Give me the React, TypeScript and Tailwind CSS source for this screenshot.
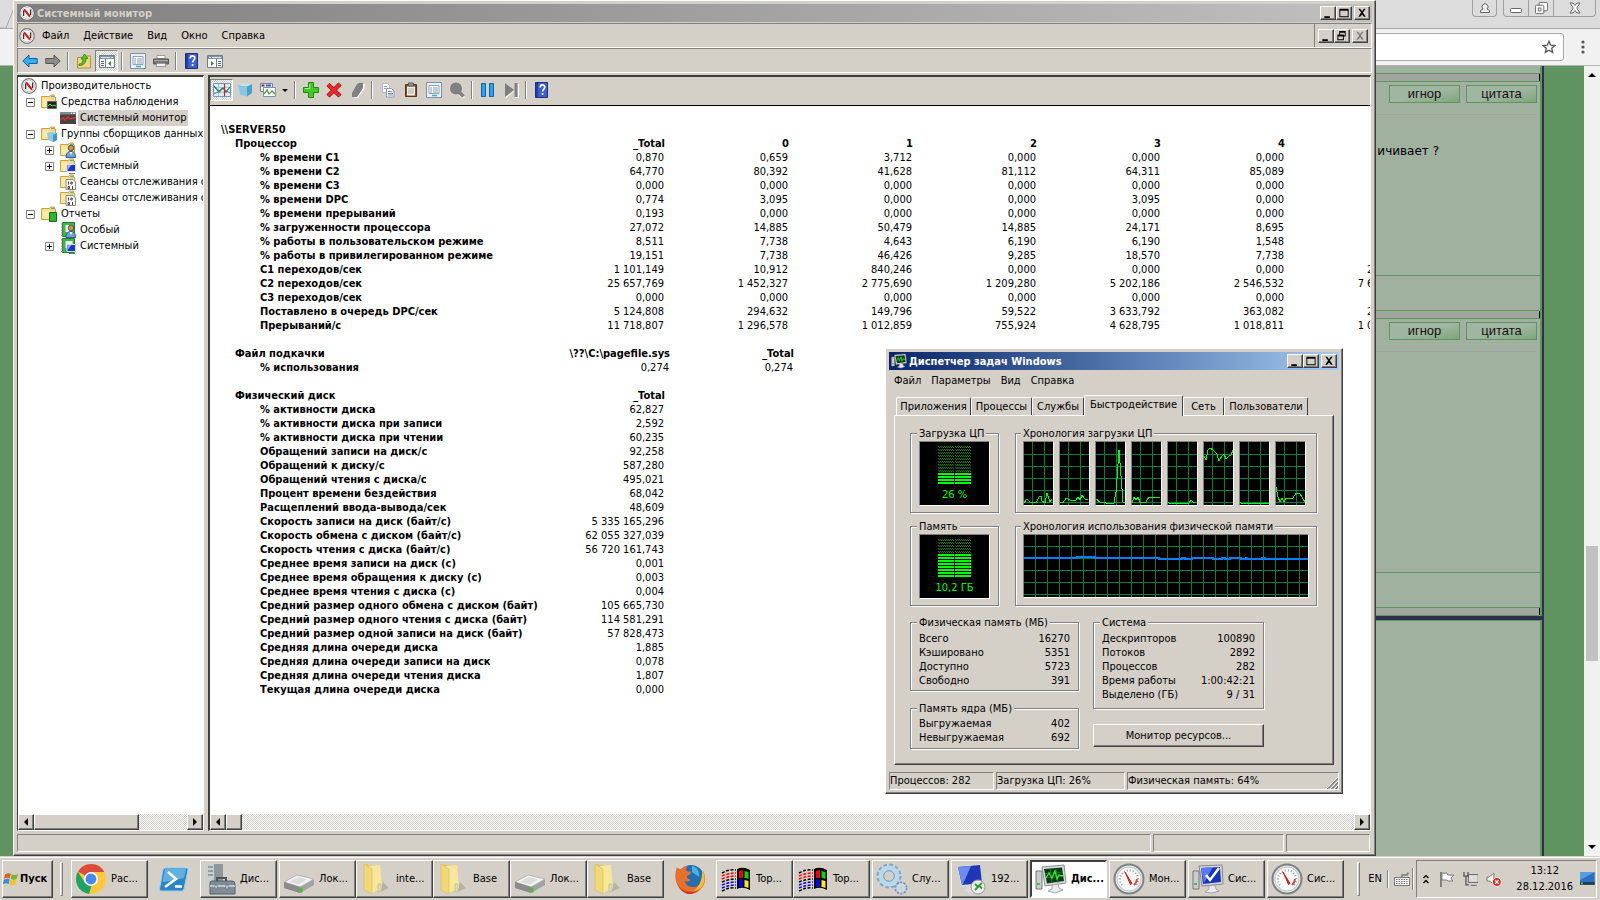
import type { ReactNode } from "react"
import clsx from "clsx"

const raised = "border border-t-white border-l-white border-r-[#404040] border-b-[#404040] bg-[#d4d0c8] shadow-[inset_-1px_-1px_0_#808080]"
const sunken = "border border-t-[#808080] border-l-[#808080] border-r-white border-b-white"
const dither = "bg-[repeating-conic-gradient(#fff_0_25%,#d4d0c8_0_50%)] bg-[length:2px_2px]"

type IconProps = { className?: string }

/* ---------- icons ---------- */

const Gauge = ({ className = "size-4" }: IconProps) => (
  <svg viewBox="0 0 16 16" className={className}>
    <circle cx="8" cy="8" r="7.3" fill="#fff" stroke="#777" strokeWidth="1.2" />
    <circle cx="8" cy="8" r="5.8" fill="#f4f4f2" stroke="#c4c4c4" strokeWidth=".8" />
    <path d="M4.600 11V5.500M11.600 10V4.500" stroke="#333" strokeWidth="1.300" />
    <path d="M5 4.400 11 11.600" stroke="#d81818" strokeWidth="2.200" />
  </svg>
)

const BigGauge = () => (
  <svg viewBox="0 0 32 32" className="size-8">
    <circle cx="16" cy="16" r="14.5" fill="#f4f4f2" stroke="#7c8284" strokeWidth="2" />
    <circle cx="16" cy="16" r="12" fill="#fbfbfa" stroke="#c9cccd" strokeWidth="1.4" />
    <path d="M9 22a9 9 0 1 1 14 0" fill="none" stroke="#999" strokeWidth="2" strokeDasharray="1 2" />
    <path d="M21 22a9 9 0 0 0 3-6" fill="none" stroke="#d44" strokeWidth="2" />
    <path d="m12 9 5.500 12.500 1.500-1z" fill="#e01818" stroke="#e01818" />
  </svg>
)

const Arrow = ({ color, stroke, flip }: { color: string; stroke: string; flip?: boolean }) => (
  <svg viewBox="0 0 16 16" className={clsx("size-4", flip && "-scale-x-100")}>
    <path d="M.8 8 7 2v3.500h8.200v5H7V14z" fill={color} stroke={stroke} />
  </svg>
)

const Folder = ({ children }: { children?: ReactNode }) => (
  <svg viewBox="0 0 16 16" className="size-4 shrink-0">
    <path d="M.5 2.500h8l1-1.500h4v2h1v10.500H.5z" fill="#f5dc84" stroke="#c9a24c" />
    <path d="M1.500 4.500h7v8.500h-7z" fill="#fbe9a8" />
    <path d="M10 2.500h3" stroke="#58a6dc" strokeWidth="1.200" />
    {children}
  </svg>
)

const person = (
  <>
    <circle cx="11" cy="6" r="2.800" fill="#c09468" stroke="#4d3a24" strokeWidth=".8" />
    <path d="M6 15.500c0-4 2-6 5-6s4.500 2 4.500 6z" fill="#6fa5d6" stroke="#2d5d90" />
    <path d="m9.500 10 1.500 3 1.500-3z" fill="#fff" />
  </>
)
const screen = (
  <>
    <path d="M7 6.500h8.500v7H7z" fill="#1a36d0" stroke="#dde" />
    <path d="m7.500 7 4 0-4 5z" fill="#8fa8f4" />
    <path d="M9 15.500h6" stroke="#777" />
  </>
)
const binary = (
  <>
    <path d="M6 5.500h7l2.500 2.500v7.500H6z" fill="#fff" stroke="#888" />
    <path d="M8.500 7.500v3M12.500 12v3" stroke="#444" />
    <path d="M10.800 8h1.400v2h-1.400zM8 12.500h1.500v2H8z" fill="none" stroke="#444" />
  </>
)

const Book = ({ children }: { children?: ReactNode }) => (
  <svg viewBox="0 0 16 16" className="size-4 shrink-0">
    <path d="M2.500.5h12v14h-12z" fill="#3cb648" stroke="#1e7c2b" />
    <path d="M5.500 3h7v7h-7z" fill="#e7f6e7" />
    <path d="M1 2h2M1 5h2M1 8h2M1 11h2M1 13.500h2" stroke="#888" />
    {children}
  </svg>
)

const MonitorGraph = () => (
  <svg viewBox="0 0 16 16" className="size-4 shrink-0">
    <path d="M0 2h16v12H0z" fill="#454545" />
    <path d="M0 2h16v2.500H0z" fill="#8a8a8a" />
    <path d="M11 3.200h1M13 3.200h2" stroke="#fff" />
    <path d="M0 10 3 8l2 2 3-3 2 2 3-1 3-.5" fill="none" stroke="#e23030" strokeWidth="1.500" />
  </svg>
)

const Cube = () => (
  <svg viewBox="0 0 16 16" className="size-4">
    <path d="M1 3.500 5 1.500l10 .5v9l-5 3.500-7-2z" fill="#bfe4f3" />
    <path d="m1 3.500 9 1 5-2.500v9l-5 3.500z" fill="#4d9fc8" />
    <path d="m1 3.500 9 1v10l-7-2z" fill="#8ac6e2" />
  </svg>
)

const PaneIcon = ({ flip }: { flip?: boolean }) => (
  <svg viewBox="0 0 16 16" className={clsx("size-4", flip && "-scale-x-100")}>
    <path d="M.5 2.500h15v12H.5z" fill="#fff" stroke="#6f7f90" />
    <path d="M1 3h14v3H1z" fill="#8393a5" />
    <path d="M2 4.500h9M12 4.500h2" stroke="#dfe6ee" />
    <path d="M6.500 6v8.500" stroke="#6f7f90" />
    <path d="M2 8.500h3M2 10.500h3M2 12.500h3" stroke="#567" />
    <path d="m9 10.500 3-2.500v5z" fill="#2a9a2a" />
  </svg>
)

const Props = () => (
  <svg viewBox="0 0 16 16" className="size-4">
    <path d="M.5.5h15v15H.5z" fill="#e9f0f6" stroke="#7b93a9" />
    <path d="M3 3.500h10v8H3z" fill="#fff" stroke="#93a3b3" />
    <path d="M4 6h2M7 6h5M4 8h2M7 8h5M4 10h2M7 10h5" stroke="#8a9caf" />
    <path d="M6 13.500h5" stroke="#2bb6e8" strokeWidth="1.500" />
  </svg>
)

const Printer = () => (
  <svg viewBox="0 0 16 16" className="size-4">
    <path d="M4 2.500h8v3H4z" fill="#fff" stroke="#999" />
    <path d="M.5 6h15v5H.5z" fill="#777" stroke="#555" />
    <path d="M1 7.500h14" stroke="#aaa" />
    <path d="M4 10.500h8l1 3H3z" fill="#eef4fa" stroke="#999" />
  </svg>
)

const Help = () => (
  <svg viewBox="0 0 16 16" className="size-4">
    <path d="M1.500.5h12v15h-12z" fill="#3c5fd0" stroke="#1c2f80" />
    <path d="M2 1h2v14H2z" fill="#243f9e" />
    <path d="M6.200 5.500c0-3.500 4.600-3.200 4.600-.4 0 2-2.200 2-2.200 4.400M8.600 11v2" fill="none" stroke="#fff" strokeWidth="1.700" />
  </svg>
)

const UpFolder = () => (
  <svg viewBox="0 0 16 16" className="size-4">
    <path d="M1.500 4.500h8l1-1.500h4v12h-13z" fill="#f2d680" stroke="#b98f3a" />
    <path d="M3 11c3 0 4-2 4-5H5l3.500-5L12 5.500h-2c0 4-2 7-7 7z" fill="#4fc52e" stroke="#278412" strokeWidth=".8" />
  </svg>
)

const ChartIcon = () => (
  <svg viewBox="0 0 18 16" className="h-4 w-[18px]">
    <path d="M.5 1.500h17v13H.5z" fill="#e2ecf7" stroke="#6f9acb" />
    <path d="M1 5.500h16M1 10.500h16M5.500 2v12" stroke="#a9c6e6" />
    <path d="m1 4 5 6 4-4 3 4 4-5" fill="none" stroke="#2c8c36" strokeWidth="1.200" />
    <path d="m1 12 4-2 4-4 8 5" fill="none" stroke="#3466c8" strokeWidth=".8" />
    <path d="M11.500 2v12" stroke="#d82020" strokeWidth="1.200" />
  </svg>
)

const GraphType = () => (
  <svg viewBox="0 0 16 16" className="size-4">
    <path d="M.5 1.500h12v8H.5z" fill="#f3f3fa" stroke="#6d7fa8" />
    <path d="M1.500 3.500h3" stroke="#a02050" strokeWidth="2" />
    <path d="M6 3.500h5" stroke="#3b62c8" strokeWidth="2" />
    <path d="M3.500 5.500h12v9h-12z" fill="#fff" stroke="#7b93b5" />
    <path d="m4 12 3-4 2 4 3-3 3 3" fill="none" stroke="#53a043" strokeWidth="1.300" />
  </svg>
)

const Plus = () => (
  <svg viewBox="0 0 16 16" className="size-4">
    <path d="M5.500.5h5v5h5v5h-5v5h-5v-5h-5v-5h5z" fill="#45c928" stroke="#168a10" />
    <path d="M6.500 2v4.500H2" fill="none" stroke="#a5ee8e" />
  </svg>
)

const Cross = () => (
  <svg viewBox="0 0 16 16" className="size-4">
    <path d="M2 2.500 14 14M14 2 2 14" stroke="#a80c0c" strokeWidth="4.500" />
    <path d="M2 2.500 14 14M14 2 2 14" stroke="#e82a2a" strokeWidth="3" />
  </svg>
)

const Pencil = () => (
  <svg viewBox="0 0 16 16" className="size-4">
    <path d="M5 16h3l7-10V2" fill="none" stroke="#fff" strokeWidth="1.500" />
    <path d="M8 2q3-2 6-1v5L8 15H3v-4z" fill="#808080" />
  </svg>
)

const Copy = () => (
  <svg viewBox="0 0 16 16" className="size-4">
    <path d="M2.500 1.500h5l2 2v7h-7z" fill="#fff" stroke="#b0b8c5" />
    <path d="M4 4.500h3M4 6.500h4" stroke="#8fa3c0" />
    <path d="M6.500 6.500h5l2.500 2.500v6H6.500z" fill="#fff" stroke="#8a9ab2" />
    <path d="M8 9.500h4M8 11.500h5M8 13h5" stroke="#6d8dbd" />
  </svg>
)

const Paste = () => (
  <svg viewBox="0 0 16 16" className="size-4">
    <path d="M2.500 2.500h11v12h-11z" fill="#80522a" stroke="#563416" />
    <path d="M4 4.500h8v9H4z" fill="#f4efe6" />
    <path d="M5.500 1h5v3h-5z" fill="#999" stroke="#555" />
    <path d="M5 7h6M5 9h6M5 11h6" stroke="#aaa" />
  </svg>
)

const Magnifier = () => (
  <svg viewBox="0 0 16 16" className="size-4">
    <path d="m11 12 4 4" stroke="#fff" strokeWidth="3" />
    <circle cx="7" cy="6.500" r="6" fill="#808080" />
    <path d="m10 10 4.500 4.500" stroke="#808080" strokeWidth="3.500" />
  </svg>
)

const Pause = () => (
  <svg viewBox="0 0 16 16" className="size-4">
    <path d="M1.500 1.500h4v13h-4zM9.500 1.500h4v13h-4z" fill="#2da0e8" stroke="#0d63a8" />
  </svg>
)

const Next = () => (
  <svg viewBox="0 0 16 16" className="size-4">
    <path d="M3 2v13.500L11 9M15.500 2v13.500H12" fill="none" stroke="#fff" />
    <path d="M2 1v14l9-7zM11.500 1h3v14h-3z" fill="#808080" />
  </svg>
)

const TaskmgrIcon = ({ className = "size-4" }: IconProps) => (
  <svg viewBox="0 0 32 32" className={className}>
    <path d="M1 8h6v18H1z" fill="#c9cdd0" stroke="#777" />
    <path d="M2 21h3" stroke="#3c3" strokeWidth="2" />
    <path d="m7 4 22-2 2 18-21 3z" fill="#d9dcde" stroke="#8a8e92" />
    <path d="m9 6 18-1.500L29 18l-17 2.500z" fill="#0a3a10" />
    <path d="M10 10.500 28 9M11 15l17-2M15 6l2 14M21 5.500l2 14" stroke="#157a20" />
    <path d="m11 15 3-5 3 5 3-7 2 8 2-4 4 1" fill="none" stroke="#36e83c" strokeWidth="1.300" />
    <path d="m17 22 6-1 1 4 4 2-8 3-7-2 4-2z" fill="#e8eaec" stroke="#a4a8ab" />
  </svg>
)

/* ---------- window chrome ---------- */

const glyphs = {
  min: <path d="M3 10h6v2H3z" />,
  max: <path d="M2 2h10v9H2zM3 4v6h8V4z" fillRule="evenodd" />,
  restore: <path d="M4 1h7v6H9v4H2V5h2zM5 3v2h4v1h1V3zM3 7v3h5V7z" fillRule="evenodd" />,
  close: <path d="M3 2h2l2 2.500L9 2h2L8 6l3 4.500H9L7 8l-2 2.500H3L6 6z" />,
}

const CaptionButton = ({ kind, label, disabled }: { kind: keyof typeof glyphs; label: string; disabled?: boolean }) => (
  <button aria-label={label} disabled={disabled} className={clsx("flex h-[14px] w-4 items-center justify-center", raised)}>
    <svg viewBox="0 0 14 13" className="h-3 w-3.5 shrink-0" fill={disabled ? "#808080" : "#000"}>
      {glyphs[kind]}
    </svg>
  </button>
)

const Captions = () => (
  <div className="ml-auto flex">
    <CaptionButton kind="min" label="Свернуть" />
    <CaptionButton kind="max" label="Развернуть" />
    <div className="w-0.5" />
    <CaptionButton kind="close" label="Закрыть" />
  </div>
)

const Sep = () => <div className="mx-[3px] h-[18px] w-0.5 border-l border-[#808080] bg-white" />

const Tool = ({ label, pressed, children }: { label: string; pressed?: boolean; children: ReactNode }) => (
  <button aria-label={label} className={clsx("flex h-[22px] w-[23px] items-center justify-center", pressed && [sunken, dither])}>
    {children}
  </button>
)

const Tri = ({ d }: { d: string }) => (
  <svg viewBox="0 0 8 8" className="size-2">
    <path d={d} />
  </svg>
)

const HScroll = ({ thumb }: { thumb: string }) => (
  <div className={clsx("flex h-4 shrink-0", dither)}>
    <button aria-label="Влево" className={clsx("flex w-4 items-center justify-center", raised)}><Tri d="M6 0v8L2 4z" /></button>
    <div className={clsx(thumb, raised)} />
    <button aria-label="Вправо" className={clsx("ml-auto flex w-4 items-center justify-center", raised)}><Tri d="M2 0v8l4-4z" /></button>
  </div>
)

/* ---------- browser behind the windows ---------- */

const PostButton = ({ children }: { children: ReactNode }) => (
  <button className="h-[18px] w-[71px] border border-[#5f935f] bg-linear-to-br from-[#a1b6a0] from-50% to-[#7da67c] font-['Liberation_Sans',sans-serif] text-[13px] leading-4 text-[#111]">
    {children}
  </button>
)

const PostBar = () => (
  <div className="h-[9px] shrink-0 border-y border-[#5f935f] bg-[#9fa69d]">
    <div className="ml-auto h-full w-px bg-black" />
  </div>
)

const Post = ({ text, body }: { text?: string; body: string }) => (
  <article>
    <PostBar />
    <div className="flex justify-end gap-1.5 px-[3px] pt-[3px]">
      <PostButton>игнор</PostButton>
      <PostButton>цитата</PostButton>
    </div>
    <div className={clsx("mx-[3px] mt-[11px] border-t border-[#9fa69d] pt-7 pr-[98px] text-right font-['DejaVu_Sans',sans-serif] text-[12px] leading-4", body)}>{text}</div>
    <div className="h-[35px] border-t border-[#5f935f]" />
  </article>
)

const Browser = () => (
  <div className="flex h-full flex-col bg-[#5f935f]">
    <div className="flex h-[29px] shrink-0 items-start justify-end gap-1.5 border-b border-[#a8a8a8] bg-[#dcdcdc] pr-1">
      <svg viewBox="0 0 14 28" className="mr-auto h-7 w-3.5">
        <path d="M0 28h6L14 8" fill="none" stroke="#aaa" />
      </svg>
      <button aria-label="Профиль" className="flex h-[17px] w-[25px] items-center justify-center rounded-b border border-t-0 border-[#a0a0a0]">
        <svg viewBox="0 0 12 12" className="size-3" fill="#eee" stroke="#666"><path d="M1.500 10.500v-2L4 7a3 3 0 1 1 4 0l2.500 1.500v2z" /></svg>
      </button>
      <div className="flex h-[17px] divide-x divide-[#a0a0a0] rounded-b border border-t-0 border-[#a0a0a0]">
        <button aria-label="Свернуть окно" className="flex w-[25px] items-center justify-center">
          <svg viewBox="0 0 12 12" className="size-3" fill="#fff" stroke="#666"><rect x=".5" y="6.500" width="11" height="4" rx="1" /></svg>
        </button>
        <button aria-label="Восстановить окно" className="flex w-[25px] items-center justify-center">
          <svg viewBox="0 0 14 14" className="size-[13px]" fill="#fff" stroke="#666"><rect x="4.500" y=".5" width="9" height="9" rx="1" /><rect x=".5" y="3.500" width="9" height="9" rx="1" /><rect x="3.500" y="6.500" width="3" height="3" /></svg>
        </button>
        <button aria-label="Закрыть окно" className="flex w-[41px] items-center justify-center">
          <svg viewBox="0 0 12 12" className="size-3" fill="#fff" stroke="#666"><path d="M1 1h3l2 2.500L8 1h3L7.800 6l3.200 5H8L6 8.500 4 11H1l3.200-5z" /></svg>
        </button>
      </div>
    </div>
    <div className="flex h-[37px] shrink-0 items-center border-b border-[#b5b5b5] bg-[#f1f1f1] pr-[15px]">
      <div className="ml-40 flex h-7 flex-1 items-center justify-end rounded-[3px] border border-[#a9a9a9] bg-white pr-[7px]">
        <svg viewBox="0 0 16 16" className="size-3.5" fill="none" stroke="#555" strokeWidth="1.500"><path d="m8 1.500 1.900 4.400 4.800.4-3.600 3.100 1.100 4.700L8 11.600l-4.200 2.500 1.100-4.700L1.300 6.300l4.800-.4z" /></svg>
      </div>
      <svg viewBox="0 0 4 14" className="ml-[17px] h-3.5 w-1" fill="#555"><circle cx="2" cy="2" r="1.600" /><circle cx="2" cy="7" r="1.600" /><circle cx="2" cy="12" r="1.600" /></svg>
    </div>
    <div className="flex min-h-0 flex-1">
      <div className="mr-10 ml-20 flex-1 border-r-2 border-[#2e2e4e]">
        <div className="flex h-full flex-col border-r-2 border-[#5f935f] bg-[#a0b19f]">
          <div className="h-[7px]" />
          <Post text="ичивает ?" body="h-[161px]" />
          <Post body="h-[221px]" />
          <PostBar />
          <div className="-mr-0.5 h-1 shrink-0 bg-[#2e2e4e]" />
          <div className="flex-1 border-t border-[#5f935f]" />
        </div>
      </div>
      <div className="flex w-4 flex-col items-center bg-[#f1f1f1] py-[5px]">
        <Tri d="M0 6h8L4 2z" />
        <div className="mt-[467px] h-[115px] w-3 bg-[#c1c1c1]" />
        <div className="mt-auto" />
        <Tri d="M0 2h8L4 6z" />
      </div>
    </div>
  </div>
)

/* ---------- performance monitor ---------- */

type Node = { label: string; icon: ReactNode; level: 0 | 1 | 2; state?: "+" | "-"; selected?: boolean }

const tree: Node[] = [
  { label: "Производительность", icon: <Gauge className="size-4 shrink-0" />, level: 0 },
  { label: "Средства наблюдения", icon: <Folder><path d="M6.500 7.500h9v7h-9z" fill="#222" stroke="#666" /><path d="m7 12 2-2 2 2 2-1 2 1" stroke="#3f3" fill="none" /></Folder>, level: 1, state: "-" },
  { label: "Системный монитор", icon: <MonitorGraph />, level: 2, selected: true },
  { label: "Группы сборщиков данных", icon: <Folder><path d="m6 7 3-1 7 1v7l-4 2-5-2z" fill="#8ecbe4" /><path d="m12 9 4-2v7l-4 2z" fill="#4295bd" /></Folder>, level: 1, state: "-" },
  { label: "Особый", icon: <Folder>{person}</Folder>, level: 2, state: "+" },
  { label: "Системный", icon: <Folder>{screen}</Folder>, level: 2, state: "+" },
  { label: "Сеансы отслеживания событий", icon: <Folder>{binary}</Folder>, level: 2 },
  { label: "Сеансы отслеживания событий запуска", icon: <Folder>{binary}</Folder>, level: 2 },
  { label: "Отчеты", icon: <Folder><path d="M8.500 6.500h7v9h-7z" fill="#2fb52f" stroke="#117011" /></Folder>, level: 1, state: "-" },
  { label: "Особый", icon: <Book>{person}</Book>, level: 2 },
  { label: "Системный", icon: <Book>{screen}</Book>, level: 2, state: "+" },
]

const TreeRow = ({ label, icon, level, state, selected }: Node) => (
  <li className={clsx("flex h-4 items-center", level === 0 ? "pl-0.5" : level === 1 ? "pl-[7px]" : "pl-[26px]")}>
    {level > 0 && (
      <span className="mr-1.5 size-[9px] shrink-0">
        {state && (
          <svg viewBox="0 0 9 9" className="size-[9px]" fill="none">
            <path d="M.5.5h8v8h-8z" stroke="#808080" />
            <path d={state === "+" ? "M2 4.500h5M4.500 2v5" : "M2 4.500h5"} stroke="#000" />
          </svg>
        )}
      </span>
    )}
    {icon}
    <span className={clsx("ml-0.5 px-0.5 leading-4 whitespace-nowrap", selected && "bg-[#d4d0c8]")}>{label}</span>
  </li>
)

type Section = { title: string; cols: string[]; rows: [string, ...string[]][]; first: string }

const report: Section[] = [
  {
    title: "Процессор",
    first: "min-w-[125px]",
    cols: ["_Total", "0", "1", "2", "3", "4", ""],
    rows: [
      ["% времени C1", "0,870", "0,659", "3,712", "0,000", "0,000", "0,000", ""],
      ["% времени C2", "64,770", "80,392", "41,628", "81,112", "64,311", "85,089", ""],
      ["% времени C3", "0,000", "0,000", "0,000", "0,000", "0,000", "0,000", ""],
      ["% времени DPC", "0,774", "3,095", "0,000", "0,000", "3,095", "0,000", ""],
      ["% времени прерываний", "0,193", "0,000", "0,000", "0,000", "0,000", "0,000", ""],
      ["% загруженности процессора", "27,072", "14,885", "50,479", "14,885", "24,171", "8,695", ""],
      ["% работы в пользовательском режиме", "8,511", "7,738", "4,643", "6,190", "6,190", "1,548", ""],
      ["% работы в привилегированном режиме", "19,151", "7,738", "46,426", "9,285", "18,570", "7,738", ""],
      ["C1 переходов/сек", "1 101,149", "10,912", "840,246", "0,000", "0,000", "0,000", "210,320"],
      ["C2 переходов/сек", "25 657,769", "1 452,327", "2 775,690", "1 209,280", "5 202,186", "2 546,532", "7 641,204"],
      ["C3 переходов/сек", "0,000", "0,000", "0,000", "0,000", "0,000", "0,000", ""],
      ["Поставлено в очередь DPC/сек", "5 124,808", "294,632", "149,796", "59,522", "3 633,792", "363,082", "205,352"],
      ["Прерываний/с", "11 718,807", "1 296,578", "1 012,859", "755,924", "4 628,795", "1 018,811", "1 035,630"],
    ],
  },
  {
    title: "Файл подкачки",
    first: "min-w-[130px]",
    cols: ["\\??\\C:\\pagefile.sys", "_Total"],
    rows: [["% использования", "0,274", "0,274"]],
  },
  {
    title: "Физический диск",
    first: "min-w-[125px]",
    cols: ["_Total"],
    rows: [
      ["% активности диска", "62,827"],
      ["% активности диска при записи", "2,592"],
      ["% активности диска при чтении", "60,235"],
      ["Обращений записи на диск/с", "92,258"],
      ["Обращений к диску/с", "587,280"],
      ["Обращений чтения с диска/с", "495,021"],
      ["Процент времени бездействия", "68,042"],
      ["Расщеплений ввода-вывода/сек", "48,609"],
      ["Скорость записи на диск (байт/с)", "5 335 165,296"],
      ["Скорость обмена с диском (байт/с)", "62 055 327,039"],
      ["Скорость чтения с диска (байт/с)", "56 720 161,743"],
      ["Среднее время записи на диск (с)", "0,001"],
      ["Среднее время обращения к диску (с)", "0,003"],
      ["Среднее время чтения с диска (с)", "0,004"],
      ["Средний размер одного обмена с диском (байт)", "105 665,730"],
      ["Средний размер одного чтения с диска (байт)", "114 581,291"],
      ["Средний размер одной записи на диск (байт)", "57 828,473"],
      ["Средняя длина очереди диска", "1,885"],
      ["Средняя длина очереди записи на диск", "0,078"],
      ["Средняя длина очереди чтения диска", "1,807"],
      ["Текущая длина очереди диска", "0,000"],
    ],
  },
]

const ReportTable = ({ title, cols, rows, first }: Section) => (
  <table className="mb-3.5 ml-[14px] border-collapse whitespace-nowrap">
    <thead>
      <tr className="h-3.5">
        <th className="p-0 text-left">{title}</th>
        {cols.map((c, i) => (
          <th key={c} className={clsx("p-0 text-right", i > 0 && "min-w-[124px]")}>{c}</th>
        ))}
      </tr>
    </thead>
    <tbody>
      {rows.map(([name, ...values]) => (
        <tr key={name} className="h-3.5">
          <th className="w-[305px] min-w-[305px] p-0 pl-[25px] text-left">{name}</th>
          {values.map((v, i) => (
            <td key={i} className={clsx("p-0 pr-px text-right", i === 0 && first)}>{v}</td>
          ))}
        </tr>
      ))}
    </tbody>
  </table>
)

const PerfMon = () => (
  <section className={clsx("absolute top-0 right-[224px] bottom-0 left-[13px] flex flex-col p-[3px]", raised)}>
    <div className="flex h-[18px] shrink-0 items-center bg-linear-to-r from-[#808080] to-[#c0c0c0] pr-0.5 pl-0.5">
      <Gauge className="size-4" />
      <h1 className="ml-0.5 pt-px font-bold text-[#d4d0c8]">Системный монитор</h1>
      <Captions />
    </div>
    <div className={clsx("mt-px flex h-[25px] shrink-0 items-center pl-px", sunken)}>
      <Gauge className="mr-[7px] size-4" />
      <nav className="flex gap-3.5 pt-px">
        <button>Файл</button>
        <button>Действие</button>
        <button>Вид</button>
        <button>Окно</button>
        <button>Справка</button>
      </nav>
      <div className="ml-auto flex h-full items-center border-l border-[#808080] pr-[3px] pl-[3px]">
        <CaptionButton kind="min" label="Свернуть панель" />
        <CaptionButton kind="restore" label="Восстановить панель" />
        <div className="w-0.5" />
        <CaptionButton kind="close" label="Закрыть панель" disabled />
      </div>
    </div>
    <div className={clsx("flex h-[25px] shrink-0 items-center", sunken)}>
      <Tool label="Назад"><Arrow color="#34aef0" stroke="#1460a8" /></Tool>
      <Tool label="Вперед"><Arrow color="#8c8c8c" stroke="#555" flip /></Tool>
      <Sep />
      <Tool label="Вверх"><UpFolder /></Tool>
      <Tool label="Дерево консоли" pressed><PaneIcon /></Tool>
      <Sep />
      <Tool label="Свойства"><Props /></Tool>
      <Tool label="Печать"><Printer /></Tool>
      <Sep />
      <Tool label="Справка"><Help /></Tool>
      <Tool label="Панель действий"><PaneIcon flip /></Tool>
    </div>
    <div className="mt-0.5 flex min-h-0 flex-1 gap-1 pr-px">
      <div className="flex w-[187px] shrink-0 flex-col border border-t-2 border-t-[#404040] border-r-white border-b-white border-l-[#404040] bg-white">
        <ul className="min-h-0 flex-1 overflow-hidden pt-px pl-px">
          {tree.map((n, i) => <TreeRow key={i} {...n} />)}
        </ul>
        <HScroll thumb="w-[105px]" />
      </div>
      <div className="flex min-w-0 flex-1 flex-col border border-t-2 border-l-2 border-t-[#404040] border-r-white border-b-white border-l-[#404040] bg-white">
        <div className="flex h-[29px] shrink-0 items-center border-b border-black bg-[#d4d0c8] pb-0.5">
          <Tool label="Текущая активность" pressed><ChartIcon /></Tool>
          <Tool label="Данные журнала"><Cube /></Tool>
          <Tool label="Тип диаграммы"><GraphType /></Tool>
          <button aria-label="Выбрать тип" className="flex w-3 justify-center"><Tri d="M1 3h6L4 6z" /></button>
          <Sep />
          <Tool label="Добавить"><Plus /></Tool>
          <Tool label="Удалить"><Cross /></Tool>
          <Tool label="Выделить"><Pencil /></Tool>
          <Sep />
          <Tool label="Копировать"><Copy /></Tool>
          <Tool label="Вставить"><Paste /></Tool>
          <Tool label="Свойства отчета"><Props /></Tool>
          <Tool label="Масштаб"><Magnifier /></Tool>
          <Sep />
          <Tool label="Остановить"><Pause /></Tool>
          <Tool label="Обновить"><Next /></Tool>
          <Sep />
          <Tool label="Справка по отчету"><Help /></Tool>
        </div>
        <div className="min-h-0 flex-1 overflow-hidden pt-[17px] pl-[11px] leading-[14px]">
          <h2 className="font-bold">\\SERVER50</h2>
          {report.map(s => <ReportTable key={s.title} {...s} />)}
        </div>
        <HScroll thumb="w-4" />
      </div>
    </div>
    <div className="mt-[3px] flex h-[18px] shrink-0 gap-0.5 pr-0.5">
      <div className={clsx("flex-1", sunken)} />
      <div className={clsx("w-[131px]", sunken)} />
      <div className={clsx("w-[84px]", sunken)} />
    </div>
  </section>
)

/* ---------- task manager ---------- */

const Group = ({ title, className, children }: { title: string; className?: string; children: ReactNode }) => (
  <fieldset className={clsx("border border-[#808080] shadow-[1px_1px_0_#fff,inset_1px_1px_0_#fff]", className)}>
    <legend className="-ml-0.5 bg-[#d4d0c8] px-0.5 leading-[13px]">{title}</legend>
    {children}
  </fieldset>
)

const Meter = ({ lit, total, label }: { lit: number; total: number; label: string }) => (
  <div className={clsx("flex h-[65px] flex-col items-center justify-between bg-black py-1 text-[#00ff00]", sunken)}>
    <svg viewBox="0 0 33 39" className="h-[39px] w-[33px]" shapeRendering="crispEdges">
      {Array.from({ length: total }, (_, i) => {
        const on = i >= total - lit
        return on
          ? <path key={i} d={`M0 ${i * 3 + 1}h16M17 ${i * 3 + 1}h16`} stroke="#00ff00" strokeWidth="2" />
          : <path key={i} d={`M0 ${i * 3 + .5}h16M17 ${i * 3 + .5}h16M1 ${i * 3 + 1.5}h15M18 ${i * 3 + 1.5}h15`} stroke="#008800" strokeDasharray="1 1" />
      })}
    </svg>
    <span className="leading-[13px]">{label}</span>
  </div>
)

const cpuLines = [
  "0,61 3,57 6,60 12,61 15,55 17,54 18,59 21,61 23,51 26,60 28,57",
  "0,60 3,61 6,56 10,58 16,58 18,55 20,58 22,53 25,57 28,58",
  "0,57 4,60 10,61 18,61 20,50 23,8 27,60 29,61",
  "0,61 2,55 4,58 6,55 8,60 14,60 17,55 28,55",
  "0,60 1,61 21,61 23,58 25,60 28,61",
  "0,14 2,18 4,8 6,6 9,8 13,12 15,19 18,14 20,12 22,17 25,14 27,13 29,8",
  "0,60 1,61 29,61",
  "0,45 2,55 4,60 6,56 8,60 10,56 17,56 20,51 24,52 29,60",
]

const CpuGraph = ({ points }: { points: string }) => (
  <div className={clsx("bg-black", sunken)}>
    <svg viewBox="0 0 29 63" className="block h-[63px] w-[29px]" fill="none" shapeRendering="crispEdges">
      <path d="M8.500 0v63M20.500 0v63M0 12.500h29M0 24.500h29M0 36.500h29M0 48.500h29M0 60.500h29" stroke="#008040" />
      <polyline points={points} stroke="#00ff00" />
    </svg>
  </div>
)

const MemGraph = () => (
  <div className={clsx("bg-black", sunken)}>
    <svg viewBox="0 0 284 62" className="block h-[62px] w-[284px]" fill="none" shapeRendering="crispEdges">
      <path d={Array.from({ length: 23 }, (_, i) => `M${i * 12 + 11.5} 0v62`).join("")} stroke="#008040" />
      <path d="M0 11.500h284M0 23.500h284M0 35.500h284M0 47.500h284M0 59.500h284" stroke="#008040" />
      <path d="M0 23h53v-1h18v1h64v1h23v-1h3v1h7v-1h21v1h9v-1h3v1h5v-1h11v1h5v-1h1v1h15v-1h3v1h43" stroke="#0080ff" strokeWidth="2" />
    </svg>
  </div>
)

const Stats = ({ rows }: { rows: [string, string][] }) => (
  <table className="w-full leading-[14px]">
    <tbody>
      {rows.map(([k, v]) => (
        <tr key={k} className="h-[14px]">
          <th className="p-0 text-left font-normal">{k}</th>
          <td className="p-0 text-right">{v}</td>
        </tr>
      ))}
    </tbody>
  </table>
)

const tabs = [
  { name: "Приложения", w: "w-[75px]" },
  { name: "Процессы", w: "w-[61px]" },
  { name: "Службы", w: "w-[52px]" },
  { name: "Быстродействие", w: "w-[99px]", active: true },
  { name: "Сеть", w: "w-[41px]" },
  { name: "Пользователи", w: "w-[84px]" },
]

const TaskManager = () => (
  <section className={clsx("absolute top-[348px] left-[885px] w-[458px] p-[3px]", raised)}>
    <div className="flex h-[18px] items-center bg-linear-to-r from-[#0a246a] to-[#a6caf0] px-0.5">
      <TaskmgrIcon />
      <h1 className="ml-0.5 pt-px font-bold text-white">Диспетчер задач Windows</h1>
      <Captions />
    </div>
    <nav className="flex h-5 items-center gap-2.5 pt-px pl-[5px]">
      <button>Файл</button>
      <button>Параметры</button>
      <button>Вид</button>
      <button>Справка</button>
    </nav>
    <div className="px-[5px] pt-[5px]">
      <div role="tablist" className="flex h-5 items-end pl-0.5">
        {tabs.map(t => (
          <button
            key={t.name}
            role="tab"
            aria-selected={!!t.active}
            className={clsx("rounded-t-xs border border-b-0 border-t-white border-l-white border-r-[#404040] whitespace-nowrap", t.w, t.active ? "-mb-px h-[21px] bg-[#d4d0c8] pb-0.5" : "h-[18px] pt-px")}
          >
            {t.name}
          </button>
        ))}
      </div>
      <div className={clsx("px-[15px] pt-[11px] pb-[15px]", raised)}>
        <div className="flex gap-4">
          <Group title="Загрузка ЦП" className="h-[86px] w-[89px] px-2 pt-px">
            <Meter lit={4} total={13} label="26 %" />
          </Group>
          <Group title="Хронология загрузки ЦП" className="h-[86px] w-[302px] px-[7px] pt-px">
            <div className="flex gap-[5px]">
              {cpuLines.map((p, i) => <CpuGraph key={i} points={p} />)}
            </div>
          </Group>
        </div>
        <div className="mt-[7px] flex gap-4">
          <Group title="Память" className="h-[86px] w-[89px] px-2 pt-px">
            <Meter lit={8} total={13} label="10,2 ГБ" />
          </Group>
          <Group title="Хронология использования физической памяти" className="h-[86px] w-[302px] px-[7px] pt-px">
            <MemGraph />
          </Group>
        </div>
        <div className="mt-2.5 flex gap-3.5">
          <div className="w-[169px]">
            <Group title="Физическая память (МБ)" className="h-[75px] px-2 pt-[3px]">
              <Stats rows={[["Всего", "16270"], ["Кэшировано", "5351"], ["Доступно", "5723"], ["Свободно", "391"]]} />
            </Group>
            <Group title="Память ядра (МБ)" className="mt-[11px] h-[47px] px-2 pt-0.5">
              <Stats rows={[["Выгружаемая", "402"], ["Невыгружаемая", "692"]]} />
            </Group>
          </div>
          <div className="w-[171px]">
            <Group title="Система" className="h-[93px] px-2 pt-[3px]">
              <Stats rows={[["Дескрипторов", "100890"], ["Потоков", "2892"], ["Процессов", "282"], ["Время работы", "1:00:42:21"], ["Выделено (ГБ)", "9 / 31"]]} />
            </Group>
            <button className={clsx("mt-[15px] h-[23px] w-full", raised)}>Монитор ресурсов...</button>
          </div>
        </div>
      </div>
    </div>
    <div className="mt-[7px] flex h-[18px] gap-0.5 leading-4">
      <div className={clsx("w-[105px]", sunken)}>Процессов: 282</div>
      <div className={clsx("w-[129px]", sunken)}>Загрузка ЦП: 26%</div>
      <div className={clsx("flex flex-1 items-end justify-between", sunken)}>
        Физическая память: 64%
        <svg viewBox="0 0 12 12" className="size-3 shrink-0">
          <path d="M0 12 12 0M4 12l8-8M8 12l4-4" stroke="#fff" />
          <path d="M1.500 12 12 1.500M5.500 12 12 5.500M9.500 12 12 9.500" stroke="#808080" strokeWidth="1.500" />
        </svg>
      </div>
    </div>
  </section>
)

/* ---------- taskbar ---------- */

const WinLogo = () => (
  <svg viewBox="0 0 16 16" className="size-4">
    <path d="M2 3.500C4 2 6 2 7.800 3L6.800 7.500C5 6.500 3.200 6.500 1 8z" fill="#ea5b23" />
    <path d="M8.800 3.300c2 1 4 1 6.200-.3l-1.200 4.800c-2 1.200-4 1.200-6 .2z" fill="#79b829" />
    <path d="M.8 9c2-1.500 4-1.500 5.800-.5L5.600 13C3.600 12 2 12-.3 13.300z" fill="#2e8fdc" />
    <path d="M7.500 8.900c2 1 4 1 6.100-.3l-1.200 4.700c-2 1.200-4 1.200-5.900.2z" fill="#fbc116" />
  </svg>
)

const Chrome = () => (
  <svg viewBox="0 0 32 32" className="size-8">
    <circle cx="16" cy="16" r="15" fill="#fdc93a" />
    <path d="M16 16 3 8.500A15 15 0 0 1 29.300 9H16z" fill="#dd4b3e" />
    <path d="M3 8.500 10 20l6.500 3L14 30.900A15 15 0 0 1 3 8.500z" fill="#1da462" />
    <circle cx="16" cy="16" r="7" fill="#fff" />
    <circle cx="16" cy="16" r="5.400" fill="#4688f4" />
  </svg>
)

const PowerShell = () => (
  <svg viewBox="0 0 32 32" className="size-8">
    <path d="M7 5h22q1.500 0 1 2l-4 19q-.5 2-2.500 2H3q-2 0-1.500-2L5 7q.5-2 2-2z" fill="#2a86c6" stroke="#9ccdf0" />
    <path d="M7 6h21l-2 9Q15 18 4.500 19z" fill="#62b0e2" />
    <path d="m10 9 8 7-11 8M17 23.500h7" fill="none" stroke="#fff" strokeWidth="2.500" />
  </svg>
)

const ServerBox = () => (
  <svg viewBox="0 0 32 32" className="size-8">
    <path d="M3 1h16v27H3z" fill="#8d979d" />
    <path d="M3 1h7v27H3z" fill="#c9d0d4" />
    <path d="M4 4h5M4 8h5M4 12h5" stroke="#596a73" />
    <path d="M6 20q0-2 2-2h20q3 0 3 3v10H6z" fill="#7f8e96" stroke="#566168" />
    <path d="M13 18v-3h9v3" fill="none" stroke="#4b5459" strokeWidth="2" />
    <path d="M6 23h25" stroke="#d3dade" strokeWidth="1.500" />
    <path d="M11 22h2v4h-2zM22 22h2v4h-2z" fill="#e4e9ec" stroke="#555" strokeWidth=".6" />
  </svg>
)

const Drive = () => (
  <svg viewBox="0 0 32 32" className="size-8">
    <path d="m1 19 13-7 17 4v6l-14 8L1 25z" fill="#a3a3a3" />
    <path d="m1 19 13-7 17 4-14 8z" fill="#f3f3f3" stroke="#b5b5b5" />
    <path d="m1 19 16 5v6L1 25z" fill="#8b8b8b" />
    <path d="m6 19 9-5 9 2.500-8 5z" fill="#dcdcdc" />
    <path d="M17 24.500h2.500v5H17z" fill="#42c520" />
  </svg>
)

const BigFolder = () => (
  <svg viewBox="0 0 32 32" className="size-8">
    <path d="m20 29 9-4-6-6z" fill="#b7b2a4" />
    <path d="m6 1 14 3v22L8 28z" fill="#e6c763" />
    <path d="m9 3 11-1 2 23-10 5z" fill="#f6e79a" />
    <path d="m4 1 8 5v25l-8-4z" fill="#f1d877" stroke="#d9bc55" strokeWidth=".6" />
    <path d="M18 21h3v7l-3 1z" fill="#bfe0f5" stroke="#e0c265" />
  </svg>
)

const Firefox = () => (
  <svg viewBox="0 0 32 32" className="size-8">
    <circle cx="17" cy="15" r="13" fill="#1f6fb4" />
    <path d="M18 3c5 1 8 6 7 11l-7-5z" fill="#45b5e0" />
    <path d="M3 4c-3 8-2 16 3 22 6 6 16 6 21 0 5-5 5-13 2-18 0 3 0 4-1 5 0 6-3 11-9 11-5 0-8-3-8-6 2 1 4 1 6-1-3-1-4-2-4-4 2-1 4-2 4-4-2-1-4 0-5-2 0-2 1-3 2-4-3 0-5 1-7 3-2 0-4-1-4-2z" fill="#e8702a" />
    <path d="M28 7c4 7 3 14-2 19-4 3-7 4-10 4 8-3 13-12 12-23z" fill="#fbc02d" />
    <path d="M4 22c5 8 17 9 22 3-4 7-16 10-22-3z" fill="#c93423" />
  </svg>
)

const OldWindows = () => (
  <svg viewBox="0 0 32 32" className="size-8">
    <path d="M17 6q6-3 13 1v20q-7-4-13-1z" fill="#000" />
    <path d="M19 8q2-1 4-.6V15q-2-.6-4 0z" fill="#f00" />
    <path d="M24.500 8q2 .3 4 1v7q-2-.8-4-1z" fill="#0d0" />
    <path d="M19 17q2-1 4-.6V24q-2-.6-4 0z" fill="#00f" />
    <path d="M24.500 17q2 .3 4 1v7q-2-.8-4-1z" fill="#fe0" />
    <g fill="none" strokeWidth="1.500" strokeDasharray="3 1.500">
      <path d="M2 10q7-4 14-3" stroke="#000" />
      <path d="M2 13q7-3 14-3M2 16q7-3 14-3" stroke="#f00" />
      <path d="M2 19q7-3 14-3" stroke="#000" />
      <path d="M2 22q7-3 14-3M2 25q7-3 14-3" stroke="#00f" />
      <path d="M2 28q7-4 14-3" stroke="#000" />
    </g>
  </svg>
)

const Gears = () => (
  <svg viewBox="0 0 32 32" className="size-8" fill="none">
    <circle cx="13" cy="13" r="11" stroke="#7fa9c9" strokeWidth="3" strokeDasharray="3.500 2.260" />
    <circle cx="13" cy="13" r="8" stroke="#b8d8ee" strokeWidth="5" />
    <circle cx="13" cy="13" r="5.300" stroke="#7299b8" />
    <circle cx="25" cy="25" r="5" stroke="#7299b8" strokeWidth="3" strokeDasharray="2 1.140" />
    <circle cx="25" cy="25" r="3.500" stroke="#c3def0" strokeWidth="2.500" />
  </svg>
)

const Remote = () => (
  <svg viewBox="0 0 32 32" className="size-8">
    <path d="m9 27 6-4h6l3 5-9 3z" fill="#d9dcde" />
    <path d="m2 3 24-2 2 21-22 2z" fill="#d7d9dc" />
    <path d="m3 4 22-2 2 18-20 2z" fill="#2038b8" />
    <path d="m3 4 13-1-8 18-1 .5z" fill="#6f8af0" />
    <circle cx="23" cy="24" r="7" fill="#e9ece9" stroke="#999" />
    <path d="m20 21 3 3-3 3M27 20l-3 2.500 3 3" fill="none" stroke="#2b9a33" strokeWidth="1.800" />
  </svg>
)

const CheckScreen = () => (
  <svg viewBox="0 0 32 32" className="size-8">
    <path d="M1 8h6v18H1z" fill="#c9cdd0" stroke="#777" />
    <path d="M2 21h3" stroke="#3c3" strokeWidth="2" />
    <path d="m7 3 23-1 1 19-21 2z" fill="#d7dbe0" stroke="#888" />
    <path d="m9 5 19-1 1 15-18 2z" fill="#1532c4" />
    <path d="m9 5 12-1-9 16z" fill="#5b7af0" />
    <path d="m14 12 4 5 9-12" fill="none" stroke="#fff" strokeWidth="2.500" />
    <path d="m17 23 6-1 1 4 3 2-7 2-7-1 4-3z" fill="#e8eaec" stroke="#a4a8ab" />
  </svg>
)

const TaskButton = ({ icon, label, active }: { icon: ReactNode; label: string; active?: boolean }) => (
  <button
    className={clsx(
      "flex h-[38px] w-[77px] items-center gap-1 overflow-hidden pl-[3px] whitespace-nowrap [&>svg]:shrink-0",
      active ? "border-2 border-t-[#404040] border-l-[#404040] border-r-white border-b-white bg-white font-bold" : raised
    )}
  >
    {icon}
    <span>{label}</span>
  </button>
)

const Grip = () => <div className="h-[34px] w-[3px] border border-t-white border-l-white border-r-[#808080] border-b-[#808080]" />

const Taskbar = () => (
  <footer className="relative flex h-11 shrink-0 items-center border-t border-[#d4d0c8] bg-[#d4d0c8] pr-[3px] pl-0.5 shadow-[inset_0_1px_0_#fff]">
    <button className={clsx("flex h-[38px] w-[51px] items-center gap-px font-bold", raised)}><WinLogo />Пуск</button>
    <div className="mr-2 ml-[7px]"><Grip /></div>
    <div className="flex items-center gap-0.5">
      <div className="flex items-center">
        <TaskButton icon={<Chrome />} label="Рас..." />
        <button aria-label="PowerShell" className="flex w-[52px] justify-center"><PowerShell /></button>
        <TaskButton icon={<ServerBox />} label="Дис..." />
      </div>
      <div className="flex items-center">
        <TaskButton icon={<Drive />} label="Лок..." />
        <TaskButton icon={<BigFolder />} label="inte..." />
        <TaskButton icon={<BigFolder />} label="Base" />
        <TaskButton icon={<Drive />} label="Лок..." />
        <TaskButton icon={<BigFolder />} label="Base" />
        <button aria-label="Firefox" className="flex w-[52px] justify-center"><Firefox /></button>
        <TaskButton icon={<OldWindows />} label="Top..." />
        <TaskButton icon={<OldWindows />} label="Top..." />
      </div>
      <TaskButton icon={<Gears />} label="Слу..." />
      <TaskButton icon={<Remote />} label="192..." />
      <TaskButton icon={<TaskmgrIcon className="size-8" />} label="Дис..." active />
      <TaskButton icon={<BigGauge />} label="Мон..." />
      <TaskButton icon={<CheckScreen />} label="Сис..." />
      <TaskButton icon={<BigGauge />} label="Сис..." />
    </div>
    <div className="ml-auto flex items-center">
      <Grip />
      <span className="mr-0.5 ml-2">EN</span>
      <Sep />
      <svg viewBox="0 0 16 16" className="ml-0.5 size-4" fill="none">
        <path d="M8 6V4h4q2 0 2-2.500" stroke="#777" strokeWidth="1.500" />
        <path d="M.5 6.500h15v8H.5z" fill="#f6f6f6" stroke="#777" />
        <path d="M2 8.500h12M2 10.500h12M2 12.500h12" stroke="#777" strokeDasharray="1.500 1" />
      </svg>
      <div className="ml-0.5 h-[22px] w-0.5 border-l border-[#808080] bg-white" />
      <div className={clsx("ml-0.5 flex h-[38px] w-[181px] items-center pl-1.5", sunken)}>
        <svg viewBox="0 0 6 10" className="h-2.5 w-1.5" fill="none" stroke="#000" strokeWidth="1.300"><path d="m.5 4 2.500-2.500L5.500 4M.5 9 3 6.500 5.500 9" /></svg>
        <svg viewBox="0 0 16 16" className="ml-2.5 size-4"><path d="M2 1v15" stroke="#666" strokeWidth="1.500" /><path d="M3 2h5l1 2h6l-3 3 2 3H9L8 9H3z" fill="#fff" stroke="#777" /></svg>
        <svg viewBox="0 0 16 16" className="ml-2 size-4"><path d="M5.500 3.500h10v8h-10z" fill="#ddd" stroke="#666" /><path d="M8 14.500h6" stroke="#666" /><path d="M1 1v4h4V1M3 5v9h3" fill="none" stroke="#555" strokeWidth="1.300" /></svg>
        <svg viewBox="0 0 16 16" className="ml-2 size-4"><path d="M1 6h2l5-4v11L3 10H1z" fill="#eee" stroke="#777" /><circle cx="11" cy="11" r="4.500" fill="#e02b20" stroke="#fff" strokeWidth=".8" /><path d="m9.300 9.300 3.400 3.400m0-3.400-3.400 3.400" stroke="#fff" strokeWidth="1.300" /></svg>
        <time className="ml-[13px] w-[60px] text-center leading-4">13:12<br />28.12.2016</time>
        <svg viewBox="0 0 16 14" className="ml-1.5 h-3.5 w-4"><path d="M0 0h15v10H0z" fill="#2b6fc0" /><path d="M0 0h15L0 8z" fill="#5a9ce0" /><path d="M0 10h15v3H0z" fill="#223a58" /><path d="M1 11.500h2" stroke="#4d4" strokeWidth="2" /></svg>
      </div>
    </div>
  </footer>
)

export default function App() {
  return (
    <div className="flex h-screen flex-col overflow-hidden font-['DejaVu_Sans_Condensed','Noto_Sans',sans-serif] text-[11px] leading-[14px] text-black">
      <main className="relative min-h-0 flex-1">
        <Browser />
        <PerfMon />
        <TaskManager />
      </main>
      <Taskbar />
    </div>
  )
}
